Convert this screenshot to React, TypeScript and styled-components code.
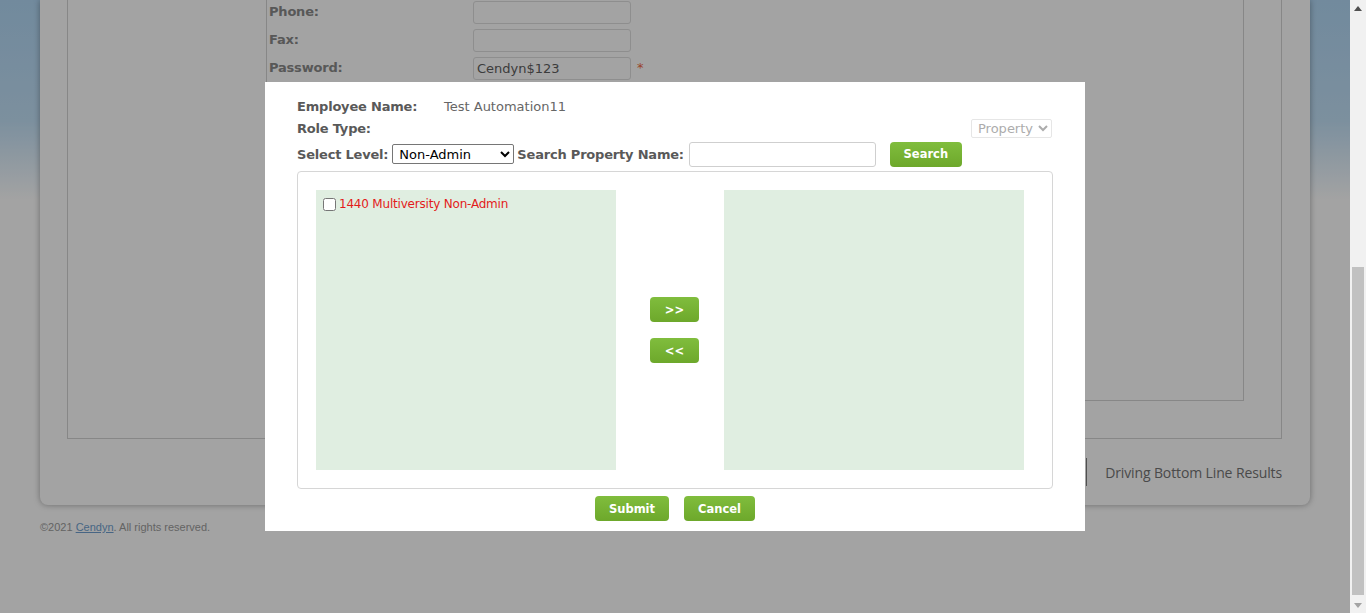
import React from "react";
import styled, { createGlobalStyle } from "styled-components";

const GlobalStyle = createGlobalStyle`
  html, body { margin: 0; padding: 0; overflow: hidden; }
  body { font-family: "DejaVu Sans", Verdana, sans-serif; background: #fff; }
`;

const Shell = styled.div`
  display: flex;
  width: 1366px;
  height: 613px;
`;

const Viewport = styled.div`
  position: relative;
  flex: 1;
  overflow: hidden;
  display: flex;
  justify-content: center;
  background: linear-gradient(to bottom, #b2d8f6 0px, #c2e1f8 120px, #ffffff 200px);
`;

const PageColumn = styled.div`
  width: 1270px;
  display: flex;
  flex-direction: column;
`;

const Card = styled.div`
  height: 505px;
  background: #fff;
  border-radius: 0 0 8px 8px;
  box-shadow: 0 0 6px rgba(0, 0, 0, 0.35);
  display: flex;
  flex-direction: column;
`;

const OuterFrame = styled.div`
  flex: 1;
  margin: 0 28px 0 27px;
  border: 1px solid #d4d4d4;
  border-top: none;
  display: flex;
  flex-direction: column;
`;

const InnerFrame = styled.div`
  flex: 1;
  margin: 0 37px 37px 198px;
  border: 1px solid #d4d4d4;
  border-top: none;
  padding-left: 2px;
`;

const FormGrid = styled.div`
  margin-top: 1px;
  display: flex;
  flex-direction: column;
`;

const FormRow = styled.div`
  display: flex;
  align-items: flex-start;
  height: 28px;
`;

const FormLabel = styled.div`
  width: 204px;
  line-height: 22px;
  font-size: 13px;
  font-weight: bold;
  letter-spacing: -0.2px;
  color: #8a8a8a;
`;

const FormInput = styled.div`
  box-sizing: border-box;
  width: 158px;
  height: 23px;
  border: 1px solid #dedede;
  border-radius: 3px;
  padding-left: 3px;
  font-size: 13px;
  line-height: 21px;
  color: #5e5e5e;
`;

const Required = styled.span`
  margin-left: 6px;
  line-height: 22px;
  font-size: 13px;
  color: #f06a3e;
`;

const CardFooter = styled.div`
  height: 66px;
  display: flex;
  align-items: center;
  justify-content: flex-end;
  padding-right: 28px;
`;

const Divider = styled.div`
  width: 1px;
  height: 28px;
  background: #7d7d7d;
  margin-right: 18px;
`;

const Tagline = styled.div`
  font-family: "Open Sans", sans-serif;
  font-size: 14px;
  letter-spacing: -0.12px;
  color: #747474;
`;

const Copyright = styled.div`
  margin-top: 16px;
  font-family: "Liberation Sans", Arial, sans-serif;
  font-size: 11px;
  line-height: 13px;
  color: #9c9c9c;
  a { color: #6f9fcf; }
`;

const Overlay = styled.div`
  position: absolute;
  inset: 0;
  background: rgba(0, 0, 0, 0.36);
`;

const Modal = styled.div`
  position: absolute;
  left: 265px;
  top: 82px;
  width: 820px;
  height: 449px;
  box-sizing: border-box;
  background: #fff;
  padding: 14px 32px 10px 32px;
  display: flex;
  flex-direction: column;
`;

const InfoRow = styled.div<{ $h: number; $mt?: number }>`
  display: flex;
  align-items: center;
  height: ${(p) => p.$h}px;
  margin-top: ${(p) => p.$mt ?? 0}px;
`;

const Label = styled.span<{ $w?: number }>`
  font-size: 13px;
  font-weight: bold;
  letter-spacing: -0.2px;
  color: #595959;
  white-space: nowrap;
  ${(p) => (p.$w ? `width: ${p.$w}px;` : "")}
`;

const Value = styled.span`
  font-size: 13px;
  color: #666;
`;

const Spacer = styled.div`
  flex: 1;
`;

const DisabledSelect = styled.select`
  width: 81px;
  height: 19px;
  margin-right: 1px;
  font-family: "DejaVu Sans", Verdana, sans-serif;
  font-size: 13px;
  color: #8a8a8a;
  background: #fff;
  border: 1px solid #dcdcdc;
  border-radius: 2px;
  padding: 0 0 0 2px;
`;

const LevelSelect = styled.select`
  width: 122px;
  height: 20px;
  margin: 0 3px 0 4px;
  font-family: "DejaVu Sans", Verdana, sans-serif;
  font-size: 13px;
  color: #000;
  background: #fff;
  border: 1px solid #767676;
  border-radius: 2px;
  padding: 0 0 0 2px;
`;

const SearchInput = styled.input`
  box-sizing: border-box;
  width: 187px;
  height: 25px;
  margin-left: 5px;
  border: 1px solid #cfcfcf;
  border-radius: 3px;
  font-size: 13px;
`;

const GreenButton = styled.button<{ $w: number }>`
  box-sizing: border-box;
  width: ${(p) => p.$w}px;
  height: 25px;
  padding: 0;
  border: none;
  border-radius: 4px;
  background: linear-gradient(to bottom, #80bd3d 0%, #6da82b 100%);
  color: #fff;
  font-family: "DejaVu Sans", Verdana, sans-serif;
  font-size: 11.5px;
  font-weight: bold;
  cursor: pointer;
`;

const SearchButton = styled(GreenButton)`
  margin-left: 14px;
`;

const Box = styled.div`
  box-sizing: border-box;
  height: 318px;
  margin-top: 4px;
  border: 1px solid #d6d6d6;
  border-radius: 4px;
  padding: 18px 28px 18px 18px;
  display: grid;
  grid-template-columns: 300px 108px 300px;
`;

const ListPanel = styled.div`
  height: 280px;
  background: #e0eee1;
  padding: 7px 0 0 7px;
  box-sizing: border-box;
`;

const ListItem = styled.label`
  display: flex;
  align-items: center;
  gap: 3px;
  font-size: 12px;
  letter-spacing: -0.2px;
  color: #e31b1b;
  line-height: 14px;
  input { margin: 0; width: 13px; height: 13px; }
`;

const MoveColumn = styled.div`
  display: flex;
  flex-direction: column;
  justify-content: center;
  gap: 16px;
  padding-left: 34px;
`;

const Actions = styled.div`
  margin-top: 7px;
  display: flex;
  justify-content: center;
  gap: 15px;
`;

const Scrollbar = styled.div`
  width: 16px;
  background: #f1f1f1;
  display: flex;
  flex-direction: column;
  align-items: center;
`;

const ScrollArrow = styled.div`
  height: 16px;
  display: flex;
  align-items: center;
  justify-content: center;
`;

const ScrollTrack = styled.div`
  flex: 1;
  display: flex;
  flex-direction: column;
`;

const ScrollThumb = styled.div`
  margin-top: 251px;
  width: 12px;
  height: 328px;
  background: #c1c1c1;
`;

export default function App() {
  return (
    <>
      <GlobalStyle />
      <Shell>
        <Viewport>
          <PageColumn>
            <Card>
              <OuterFrame>
                <InnerFrame>
                  <FormGrid>
                    <FormRow>
                      <FormLabel>Phone:</FormLabel>
                      <FormInput />
                    </FormRow>
                    <FormRow>
                      <FormLabel>Fax:</FormLabel>
                      <FormInput />
                    </FormRow>
                    <FormRow>
                      <FormLabel>Password:</FormLabel>
                      <FormInput>Cendyn$123</FormInput>
                      <Required>*</Required>
                    </FormRow>
                  </FormGrid>
                </InnerFrame>
              </OuterFrame>
              <CardFooter>
                <Divider />
                <Tagline>Driving Bottom Line Results</Tagline>
              </CardFooter>
            </Card>
            <Copyright>
              ©2021 <a href="#">Cendyn</a>. All rights reserved.
            </Copyright>
          </PageColumn>
          <Overlay />
          <Modal>
            <InfoRow $h={20}>
              <Label $w={147}>Employee Name:</Label>
              <Value>Test Automation11</Value>
            </InfoRow>
            <InfoRow $h={22} $mt={1}>
              <Label>Role Type:</Label>
              <Spacer />
              <DisabledSelect disabled defaultValue="Property">
                <option>Property</option>
              </DisabledSelect>
            </InfoRow>
            <InfoRow $h={26} $mt={2}>
              <Label>Select Level:</Label>
              <LevelSelect defaultValue="Non-Admin">
                <option>Non-Admin</option>
                <option>Admin</option>
              </LevelSelect>
              <Label>Search Property Name:</Label>
              <SearchInput type="text" />
              <SearchButton $w={72}>Search</SearchButton>
            </InfoRow>
            <Box>
              <ListPanel>
                <ListItem>
                  <input type="checkbox" />
                  1440 Multiversity Non-Admin
                </ListItem>
              </ListPanel>
              <MoveColumn>
                <GreenButton $w={49}>&gt;&gt;</GreenButton>
                <GreenButton $w={49}>&lt;&lt;</GreenButton>
              </MoveColumn>
              <ListPanel />
            </Box>
            <Actions>
              <GreenButton $w={74}>Submit</GreenButton>
              <GreenButton $w={71}>Cancel</GreenButton>
            </Actions>
          </Modal>
        </Viewport>
        <Scrollbar>
          <ScrollArrow>
            <svg width="8" height="5" viewBox="0 0 8 5">
              <path d="M0 5 L4 0 L8 5 Z" fill="#505050" />
            </svg>
          </ScrollArrow>
          <ScrollTrack>
            <ScrollThumb />
          </ScrollTrack>
          <ScrollArrow>
            <svg width="8" height="5" viewBox="0 0 8 5">
              <path d="M0 0 L8 0 L4 5 Z" fill="#a3a3a3" />
            </svg>
          </ScrollArrow>
        </Scrollbar>
      </Shell>
    </>
  );
}
